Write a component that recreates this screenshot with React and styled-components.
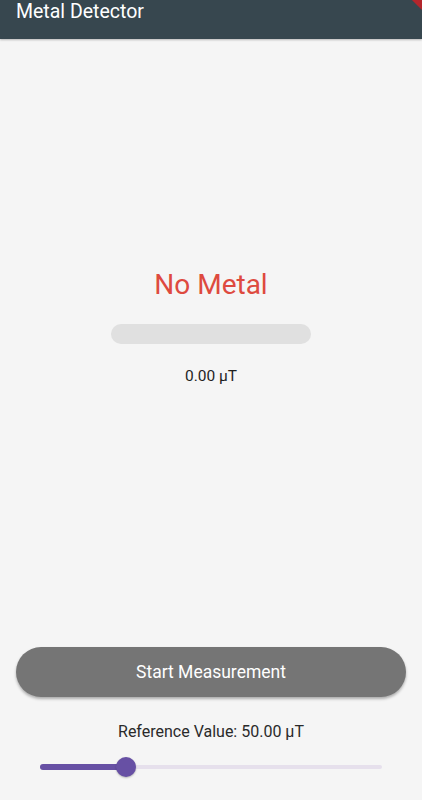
import React from 'react'
import styled, { createGlobalStyle } from 'styled-components'

const GlobalStyle = createGlobalStyle`
  html, body {
    margin: 0;
    padding: 0;
    background: #f5f5f5;
    font-family: Roboto, "Noto Sans", "Liberation Sans", sans-serif;
  }
`

const App = () => (
  <SPage>
    <GlobalStyle />
    <SAppBar>
      <STitle>Metal Detector</STitle>
      <SDebugCorner />
    </SAppBar>
    <SCenter>
      <SStatus>No Metal</SStatus>
      <SBar>
        <SBarFill style={{ width: '0%' }} />
      </SBar>
      <SReading>0.00 µT</SReading>
    </SCenter>
    <SBottom>
      <SButton>Start Measurement</SButton>
      <SRefLabel>Reference Value: 50.00 µT</SRefLabel>
      <SSlider>
        <STrack />
        <SActive style={{ width: '25%' }} />
        <SThumb style={{ left: '25%' }} />
      </SSlider>
    </SBottom>
  </SPage>
)

const SPage = styled.div`
  height: 800px;
  display: flex;
  flex-direction: column;
  background: #f5f5f5;
  overflow: hidden;
`

const SAppBar = styled.div`
  position: relative;
  height: 39px;
  flex-shrink: 0;
  background: #37474f;
  box-shadow: 0 1px 2px rgba(0, 0, 0, 0.25);
  overflow: hidden;
`

const STitle = styled.div`
  color: #ffffff;
  font-size: 19.5px;
  line-height: 24px;
  padding-left: 16px;
`

const SDebugCorner = styled.div`
  position: absolute;
  top: -4px;
  right: -28px;
  width: 60px;
  height: 10px;
  background: #b3262c;
  transform: rotate(45deg);
`

const SCenter = styled.div`
  flex: 1;
  display: flex;
  flex-direction: column;
  align-items: center;
  justify-content: center;
  padding-bottom: 32px;
`

const SStatus = styled.div`
  color: #de4a3f;
  font-size: 28px;
  line-height: 32px;
`

const SBar = styled.div`
  width: 200px;
  height: 20px;
  margin-top: 23px;
  border-radius: 10px;
  background: #e0e0e0;
  overflow: hidden;
`

const SBarFill = styled.div`
  height: 100%;
  background: #de4a3f;
`

const SReading = styled.div`
  margin-top: 22px;
  color: #1f1f1f;
  font-size: 15.5px;
  line-height: 20px;
`

const SBottom = styled.div`
  display: flex;
  flex-direction: column;
  align-items: center;
  padding: 0 16px 23px;
`

const SButton = styled.button`
  align-self: stretch;
  height: 50px;
  border: none;
  border-radius: 25px;
  background: #757575;
  color: #ffffff;
  font-family: inherit;
  font-size: 17.5px;
  box-shadow: 0 2px 3px rgba(0, 0, 0, 0.3);
`

const SRefLabel = styled.div`
  margin-top: 25px;
  color: #2a2a2a;
  font-size: 16px;
  line-height: 20px;
`

const SSlider = styled.div`
  position: relative;
  align-self: stretch;
  margin: 15px 24px 0;
  height: 20px;
`

const STrack = styled.div`
  position: absolute;
  left: 0;
  right: 0;
  top: 8px;
  height: 4px;
  border-radius: 2px;
  background: #e6e0ec;
`

const SActive = styled.div`
  position: absolute;
  left: 0;
  top: 7px;
  height: 6px;
  border-radius: 3px;
  background: #6750a4;
`

const SThumb = styled.div`
  position: absolute;
  top: 0;
  width: 20px;
  height: 20px;
  margin-left: -10px;
  border-radius: 50%;
  background: #6750a4;
  box-shadow: 0 1px 2px rgba(0, 0, 0, 0.25);
`

export default App
